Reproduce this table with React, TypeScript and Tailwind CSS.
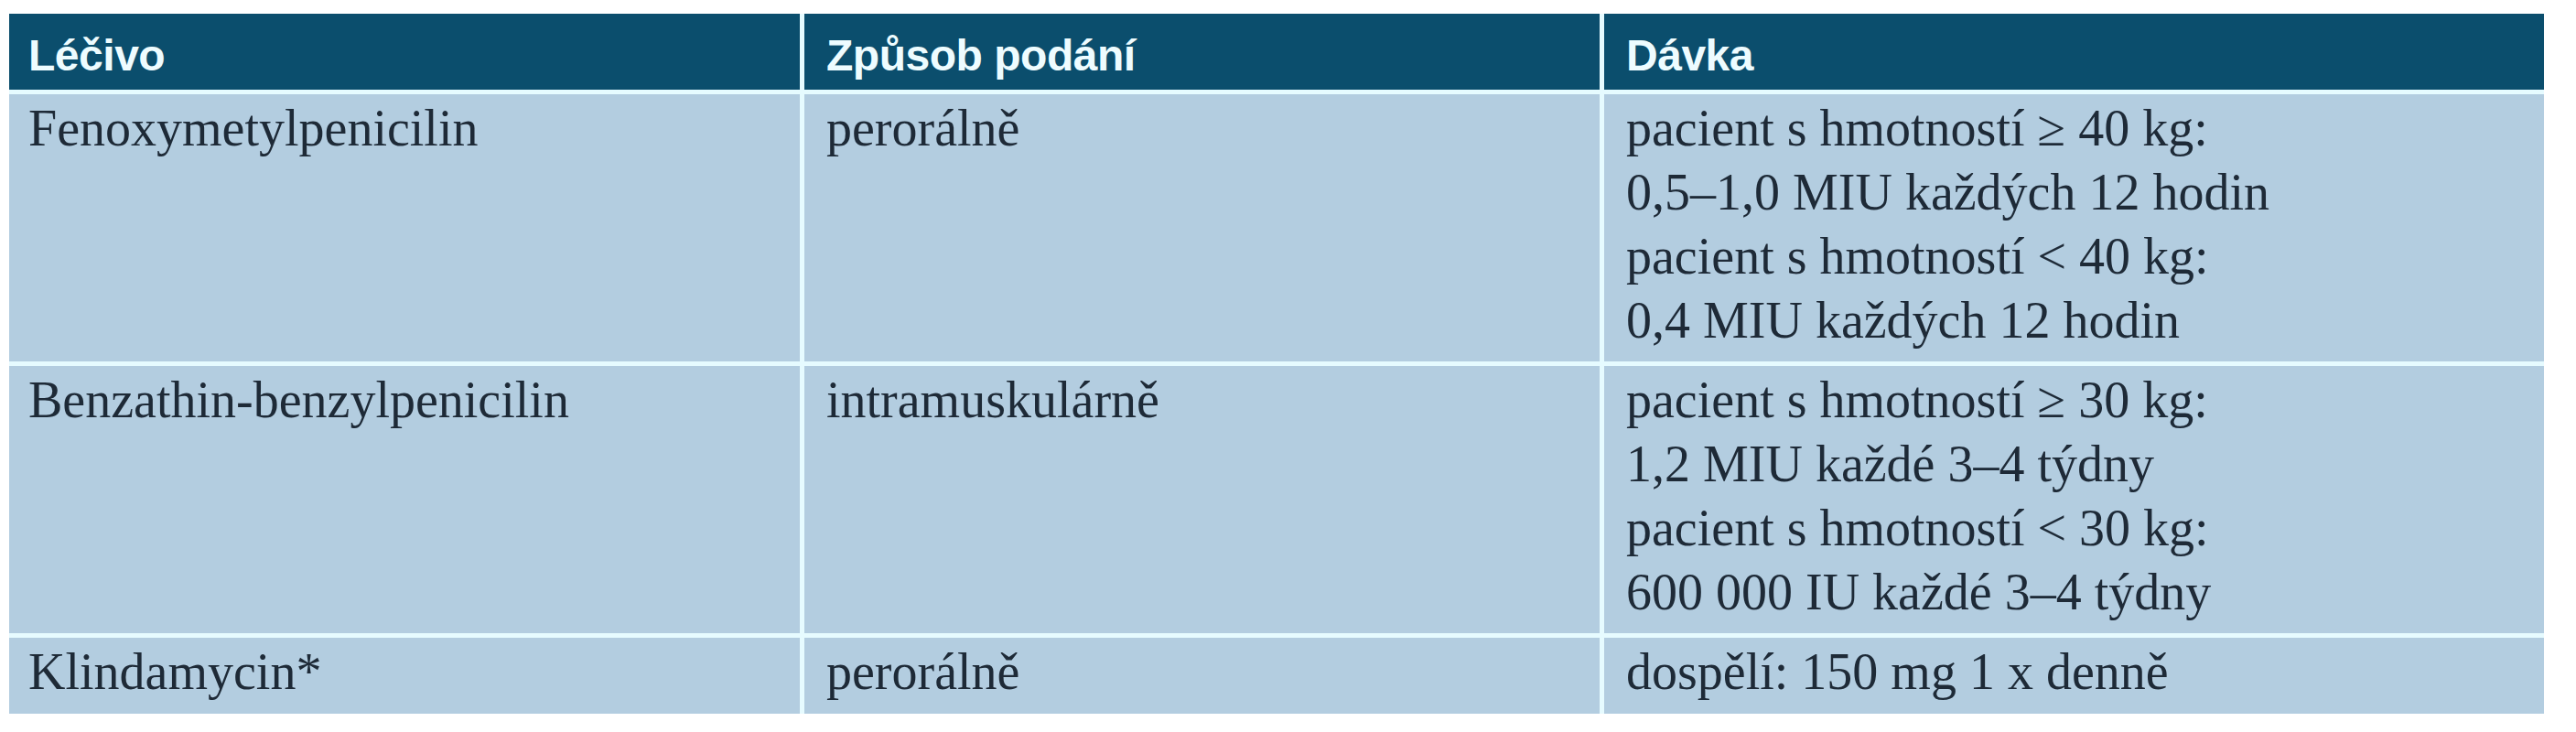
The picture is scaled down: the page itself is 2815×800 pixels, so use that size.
import React from 'react';

type Row = {
  drug: string;
  route: string;
  dose: string[];
  tall?: boolean;
};

const rows: Row[] = [
  {
    drug: 'Fenoxymetylpenicilin',
    route: 'perorálně',
    dose: [
      'pacient s hmotností ≥ 40 kg:',
      '0,5–1,0 MIU každých 12 hodin',
      'pacient s hmotností < 40 kg:',
      '0,4 MIU každých 12 hodin',
    ],
    tall: true,
  },
  {
    drug: 'Benzathin-benzylpenicilin',
    route: 'intramuskulárně',
    dose: [
      'pacient s hmotností ≥ 30 kg:',
      '1,2 MIU každé 3–4 týdny',
      'pacient s hmotností < 30 kg:',
      '600 000 IU každé 3–4 týdny',
    ],
    tall: true,
  },
  {
    drug: 'Klindamycin*',
    route: 'perorálně',
    dose: ['dospělí: 150 mg 1 x denně'],
  },
];

const headers = ['Léčivo', 'Způsob podání', 'Dávka'];

const App: React.FC = () => {
  return (
    <div className="min-h-[800px] w-full bg-white pt-[15px] pl-[10px]">
      <div className="grid w-[2770px] grid-cols-[864px_869px_1027px] gap-[5px] bg-[#e6fbff]">
        {/* Header */}
        {headers.map((h, i) => (
          <div
            key={h}
            className={`h-[83px] bg-[#0b4e6d] pt-[22px] ${i === 0 ? 'pl-[21px]' : 'pl-[24px]'}`}
          >
            <span className="block text-[48px] leading-[48px] font-bold tracking-[-0.01em] text-[#eefcff] font-['Liberation_Sans',Arial,sans-serif]">
              {h}
            </span>
          </div>
        ))}

        {/* Body rows */}
        {rows.map((row) => {
          const cell = `${row.tall ? 'h-[292px]' : 'h-[83px]'} bg-[#b3cde0] pt-[2px] pb-[10px] text-[56px] leading-[70px] text-[#1e2a37] font-['Liberation_Serif','Times_New_Roman',serif]`;
          return (
            <React.Fragment key={row.drug}>
              <div className={`${cell} pl-[21px]`}>{row.drug}</div>
              <div className={`${cell} pl-[24px]`}>{row.route}</div>
              <div className={`${cell} pl-[24px]`}>
                {row.dose.map((line) => (
                  <div key={line}>{line}</div>
                ))}
              </div>
            </React.Fragment>
          );
        })}
      </div>
    </div>
  );
};

export default App;
